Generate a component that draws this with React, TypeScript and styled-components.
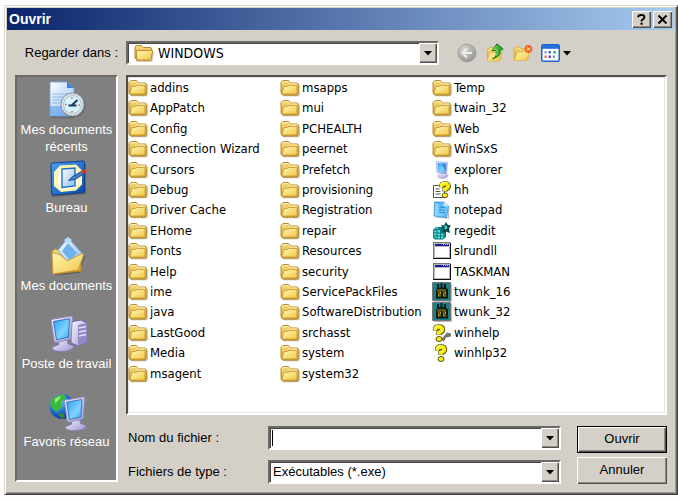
import React from "react";
import styled, { createGlobalStyle, css } from "styled-components";

const face = "#d4d0c8";
const uiFont = '"Liberation Sans", Arial, sans-serif';
const listFont = '"DejaVu Sans Condensed", "DejaVu Sans", sans-serif';

const GlobalStyle = createGlobalStyle`
  *, *::before, *::after { box-sizing: border-box; }
  body { margin: 0; background: #fefefe; color: #000; font: 13px/16px ${uiFont}; }
  button, input, select { font: inherit; color: inherit; margin: 0; padding: 0; border: 0; border-radius: 0; background: none; }
  ul { list-style: none; margin: 0; padding: 0; }
  svg { display: block; flex: none; }
`;

const sunken = css`
  border: 2px solid;
  border-color: #6c6a66 #fff #fff #6c6a66;
`;

const raised = css`
  background: ${face};
  box-shadow: inset 1px 1px 0 #fff, inset -1px -1px 0 #505050, inset -2px -2px 0 #8c8a85;
`;

const Dialog = styled.main`
  margin: 5px 0 3px 4px;
  padding: 1px 3px 10px 1px;
  background: ${face};
  border: 1px solid;
  border-color: #dcd2cc #404040 #404040 #dcd2cc;
  box-shadow: inset 1px 1px 0 #fff, inset -1px -1px 0 #66645f, inset -2px -2px 0 #a09d96;
`;

const TitleBar = styled.header`
  display: flex;
  align-items: center;
  gap: 2px;
  height: 22px;
  margin: 1px 0 0 1px;
  padding: 0 2px;
  background: linear-gradient(90deg, #0a246a, #a6caf0);
`;

const Title = styled.h1`
  flex: 1;
  margin: 0;
  color: #fff;
  font-size: 14px;
  line-height: 16px;
`;

const CaptionButton = styled.button`
  ${raised}
  display: grid;
  place-items: center;
  width: 19px;
  height: 17px;
`;

const Toolbar = styled.div`
  display: grid;
  grid-template-columns: 103px minmax(0, 1fr) 220px;
  column-gap: 8px;
  align-items: center;
  margin: 11px 7px 10px 9px;
`;

const ToolLabel = styled.label`
  text-align: right;
`;

const Tools = styled.div`
  display: flex;
  align-items: center;
  gap: 8px;
  padding-left: 10px;
`;

const ToolButton = styled.button`
  display: flex;
  align-items: center;
  gap: 3px;
  height: 20px;
`;

const Field = styled.div<{ $icon?: boolean }>`
  ${sunken}
  display: grid;
  grid-template-columns: ${(p) => (p.$icon ? "27px" : "0")} minmax(0, 1fr) 18px;
  align-items: center;
  height: 24px;
  background: #fff;
  box-shadow: inset 1px 1px 0 #47464a;
`;

const FieldIcon = styled.span`
  grid-area: 1 / 1;
  padding-left: 6px;
  pointer-events: none;
  z-index: 1;
`;

const Select = styled.select<{ $icon?: boolean }>`
  grid-area: 1 / 1 / 2 / 4;
  appearance: none;
  width: 100%;
  height: 20px;
  padding: 0 20px 0 ${(p) => (p.$icon ? "30px" : "3px")};
  font-family: ${(p) => (p.$icon ? listFont : uiFont)};
  font-size: ${(p) => (p.$icon ? "14px" : "13px")};
  outline: none;
`;

const TextInput = styled.input`
  grid-area: 1 / 1 / 2 / 3;
  width: 100%;
  height: 20px;
  padding: 0 3px;
  outline: none;
  caret-color: transparent;
`;

const Caret = styled.span`
  grid-area: 1 / 2;
  width: 1px;
  height: 16px;
  margin-left: 2px;
  background: #000;
  pointer-events: none;
`;

const DropFace = styled.span`
  ${raised}
  grid-area: 1 / 3;
  display: grid;
  place-items: center;
  align-self: stretch;
  pointer-events: none;
`;

const DropButton = styled.button`
  ${raised}
  grid-area: 1 / 3;
  display: grid;
  place-items: center;
  align-self: stretch;
`;

const Body = styled.div`
  display: grid;
  grid-template-columns: 103px minmax(0, 1fr);
  column-gap: 8px;
  margin: 0 7px 0 9px;
`;

const Places = styled.nav`
  ${sunken}
  padding-top: 4px;
  margin-bottom: 2px;
  background: #808080;
`;

const Place = styled.button`
  display: flex;
  flex-direction: column;
  align-items: center;
  width: 100%;
  height: 78px;
  color: #fff;
  line-height: 17px;
  white-space: pre-line;

  svg { margin-bottom: 2px; }
`;

const FileList = styled.ul`
  ${sunken}
  display: grid;
  grid-auto-flow: column;
  grid-template-rows: repeat(15, minmax(20px, 1fr));
  grid-auto-columns: 152px;
  height: 340px;
  padding: 1px 0 29px;
  background: #fff;
  box-shadow: inset 0 0 0 1px #e8e6e2;
  border-top-color: #504e4c;
  border-left-color: #504e4c;
  overflow: hidden;
`;

const FileButton = styled.button`
  display: flex;
  align-items: center;
  gap: 2px;
  height: 20px;
  font-family: ${listFont};
  white-space: nowrap;
`;

const Form = styled.form`
  display: flex;
  gap: 16px;
  margin-top: 11px;
`;

const Fields = styled.div`
  flex: 1;
  display: grid;
  grid-template-columns: 140px minmax(0, 1fr);
  grid-auto-rows: 24px;
  row-gap: 10px;
  align-items: center;
  padding-left: 2px;
`;

const Actions = styled.div`
  display: grid;
  grid-auto-rows: 27px;
  row-gap: 4px;
  width: 90px;
`;

const PushButton = styled.button<{ $default?: boolean }>`
  ${raised}
  padding-bottom: 2px;
  border: ${(p) => (p.$default ? "1px solid #000" : "0")};
`;

const Defs = styled.svg`
  position: absolute;
`;

const Gradients = () => (
  <Defs width="0" height="0" aria-hidden="true">
    <defs>
      <linearGradient id="folder" x1="0" y1="0" x2="1" y2="1">
        <stop offset="0" stopColor="#fff9b8" />
        <stop offset="1" stopColor="#f2c545" />
      </linearGradient>
      <linearGradient id="folderBack" x1="0" y1="0" x2="0" y2="1">
        <stop offset="0" stopColor="#f7dc82" />
        <stop offset="1" stopColor="#d9a02c" />
      </linearGradient>
      <linearGradient id="screen" x1="0" y1="0" x2="1" y2="1">
        <stop offset="0" stopColor="#2f9af5" />
        <stop offset="0.6" stopColor="#7fd4ff" />
        <stop offset="1" stopColor="#3fa4f2" />
      </linearGradient>
      <linearGradient id="plastic" x1="0" y1="0" x2="1" y2="1">
        <stop offset="0" stopColor="#fafaff" />
        <stop offset="1" stopColor="#9a95d0" />
      </linearGradient>
      <linearGradient id="sheet" x1="0" y1="0" x2="1" y2="1">
        <stop offset="0" stopColor="#ffffff" />
        <stop offset="1" stopColor="#8dbcf0" />
      </linearGradient>
      <linearGradient id="desk" x1="0" y1="0" x2="1" y2="1">
        <stop offset="0" stopColor="#4aa0f0" />
        <stop offset="1" stopColor="#0b49a8" />
      </linearGradient>
      <radialGradient id="globe" cx="0.35" cy="0.3" r="0.75">
        <stop offset="0" stopColor="#8fd8ff" />
        <stop offset="0.5" stopColor="#2478e0" />
        <stop offset="1" stopColor="#0c2f90" />
      </radialGradient>
      <radialGradient id="disc" cx="0.35" cy="0.3" r="0.8">
        <stop offset="0" stopColor="#d6d6d4" />
        <stop offset="1" stopColor="#8f8f8d" />
      </radialGradient>
    </defs>
  </Defs>
);

const FolderIcon = () => (
  <svg width="20" height="18" viewBox="0 0 20 18">
    <path d="M3 16.5h15l1-1V5.5" fill="none" stroke="#8a7a50" strokeOpacity=".55" strokeWidth="1.4" />
    <path d="M1 14V3.5L3 1.5h5.5L10.5 4H17q1.2 0 1.2 1.2V15L17 16H2.5z" fill="url(#folderBack)" stroke="#b98a2c" />
    <path d="M2 4l1.5-1.5h4.7L9.8 5H17" fill="none" stroke="#fff0b0" />
    <path d="M2 14.5L4 7.5h3.5L9 6.5h8v8.5H3z" fill="url(#folder)" stroke="#c79a35" strokeWidth=".8" />
  </svg>
);

const OpenFolderIcon = () => (
  <svg width="20" height="18" viewBox="0 0 20 18">
    <path d="M2 17h15.5l1.5-9" fill="none" stroke="#8a7a50" strokeOpacity=".5" strokeWidth="1.6" />
    <path d="M1 14V3.5Q1 1.5 3 1.5h4.5l2 2H16q1.500 0 1.500 1.500v9L16 16H3z" fill="url(#folderBack)" stroke="#b98a2c" />
    <path d="M2.5 6.5h16.2L17 15.2q-.2.8-1 .8H4q-1 0-1.2-1z" fill="url(#folder)" stroke="#c08d28" />
  </svg>
);

const ExplorerIcon = () => (
  <svg width="20" height="18" viewBox="0 0 20 18">
    <path d="M4 .5l11.500 1-1 11.500-9.500-1.500z" fill="url(#plastic)" stroke="#9fb2e6" strokeWidth=".8" />
    <path d="M5.500 2l8.800.8-.9 8.900-7.300-1.200z" fill="url(#screen)" />
    <path d="M9.500 2.400l4.700.4-.8 7.500z" fill="#1262d8" opacity=".65" />
    <path d="M8 12.500h5.500l2.500 2q-1.500 3-5.500 3-4 0-5-2.500z" fill="url(#plastic)" stroke="#9a90cc" strokeWidth=".6" />
  </svg>
);

const QuestionMark = () => (
  <>
    <path d="M6.500 6.500V5.500Q6.500 3 10 3T13.500 5.800Q13.500 7.500 10 8.800V11" fill="none" stroke="#55510a" strokeWidth="5.400" />
    <ellipse cx="10" cy="15" rx="3" ry="2.500" fill="#f8ee1c" stroke="#55510a" />
    <path d="M6.300 6.200V5.300Q6.300 2.800 9.800 2.800T13.300 5.600Q13.300 7.300 9.800 8.600V10.800" fill="none" stroke="#f8ee1c" strokeWidth="3.800" />
    <path d="M5.500 5Q5.500 1.800 9.500 1.800" fill="none" stroke="#fffba0" />
  </>
);

const HelpFileIcon = () => (
  <svg width="20" height="18" viewBox="0 0 20 18">
    <path d="M1.500 4.500h11v12h-11z" fill="#fff" stroke="#555" />
    <path d="M3.500 8h4M3.500 10.500h5M3.500 13h5" stroke="#555" />
    <g transform="translate(3.500 0) scale(.95)">
      <QuestionMark />
    </g>
  </svg>
);

const WinHelpIcon = ({ shadow = false }: { shadow?: boolean }) => (
  <svg width="20" height="18" viewBox="0 0 20 18">
    {shadow && <path d="M9 15.500l6-7 4 1v3l-5 1-2 4z" fill="#77776a" />}
    <g transform={shadow ? "translate(-3 0)" : "translate(-1 0)"}>
      <QuestionMark />
    </g>
  </svg>
);

const NotepadIcon = () => (
  <svg width="20" height="18" viewBox="0 0 20 18">
    <path d="M4 16l12.500 1V6" fill="none" stroke="#8796a8" strokeOpacity=".6" strokeWidth="1.500" />
    <path d="M2.500 1h9.500l4.500 4-2 11.500-12.500-1.500z" fill="url(#screen)" stroke="#4a93c8" strokeWidth=".8" />
    <path d="M3 2l4 .5-1.500 12-2.500-.3z" fill="#a8dcfa" opacity=".7" />
    <path d="M12 1l4.500 4-4.800-.5z" fill="#d9efff" />
    <path d="M7.500 6l6 .8M7.200 8.500l6 .8M6.900 11l6 .8" stroke="#187ec8" strokeWidth=".9" />
  </svg>
);

const RegeditIcon = () => (
  <svg width="20" height="18" viewBox="0 0 20 18">
    <path d="M1 8l3-3h7l3 3v7l-3 2.500H3L1 16z" fill="#0b7c7e" />
    <path d="M2 8.500h2.500v2H2zM5.500 8h2.500v2.500H5.500zM2 11.500h2.500v2H2zM5.500 11.500h2.500v2H5.500zM9 11.500h2.500v2H9zM5.500 14.500h2.500v2H5.500zM2.500 14.500h2v1.500h-2zM9 14.500h2.500v2H9zM4.500 5.500h2.500l-1.500 1.500H3.500z" fill="#5fdcd6" />
    <path d="M9 3l3 .5L14 0l2 3 3 .5-2 3 1 4.500-4-1.500L10.500 11l.5-4z" fill="#06484c" />
    <path d="M12 4.500l2.500-1.500L15.500 6l-2.500 2z" fill="#49c9c6" />
  </svg>
);

const AppWindowIcon = () => (
  <svg width="20" height="18" viewBox="0 0 20 18" shapeRendering="crispEdges">
    <path d="M1 0h18v17H1z" fill="#b9b9b9" />
    <path d="M18 1h1v16H1v-1h17z" fill="#111" />
    <path d="M1 0h17v1H1zM1 0h1v16H1z" fill="#777" />
    <path d="M3 5h14v10H3z" fill="#fff" />
    <path d="M3 2h14v2H3z" fill="#1a1a9c" />
    <path d="M11 2h1v1h-1zM13 2h1v1h-1zM15 2h1v1h-1z" fill="#d4d0c8" />
  </svg>
);

const TwunkIcon = () => (
  <svg width="20" height="20" viewBox="0 0 20 20">
    <path d="M.5.500h18v18H.500z" fill="#188088" stroke="#777" />
    <path d="M2 19.500h17.500V2" fill="none" stroke="#bbb" />
    <path d="M6 2v5M9.500 1v6M13 2v5" stroke="#061c1c" strokeWidth="2" />
    <path d="M4 7.500l2-2h8l2 2v9H4z" fill="#101408" />
    <path d="M5.500 10h3v2h-2v2h2.500M10.500 10h3v2h-2v2h3M5 8h9" fill="none" stroke="#a8a020" strokeWidth="1.100" />
  </svg>
);

const DownArrow = () => (
  <svg width="8" height="5" viewBox="0 0 8 5">
    <path d="M0 0h8L4 4.600z" />
  </svg>
);

const HelpGlyph = () => (
  <svg width="9" height="11" viewBox="0 0 9 11">
    <path d="M1.200 3.300Q1.200 1 4.300 1T7.400 3.200Q7.400 4.400 5.800 5.300 4.500 6 4.500 7.500" fill="none" stroke="#000" strokeWidth="1.900" />
    <path d="M3.500 8.700h2.200v2H3.500z" />
  </svg>
);

const CloseGlyph = () => (
  <svg width="11" height="9" viewBox="0 0 11 9">
    <path d="M1.500.5l8 8M9.500.500l-8 8" stroke="#000" strokeWidth="2" />
  </svg>
);

const BackIcon = () => (
  <svg width="20" height="20" viewBox="0 0 20 20">
    <circle cx="10" cy="10" r="9" fill="url(#disc)" stroke="#9b9b99" strokeWidth=".8" />
    <path d="M15 10H6.500M10 5.500L5.500 10l4.500 4.500" fill="none" stroke="#ececea" strokeWidth="2.200" />
  </svg>
);

const UpIcon = () => (
  <svg width="20" height="20" viewBox="0 0 20 20">
    <path d="M2.500 17V6.500l2-2h4l1.500 2h6V16L14 18z" fill="url(#folderBack)" stroke="#d3ad47" strokeWidth=".8" />
    <path d="M2 18l3-8.500h6.500l5-1.500-2 10z" fill="url(#folder)" stroke="#dbb64c" strokeWidth=".8" />
    <path d="M7.500 15.800q5-1.500 3.600-8.300l-4 .2L12 .8 18.200 6l-3.200.8q1.600 7-7.500 9z" fill="#38b030" stroke="#14701a" strokeWidth=".9" />
    <path d="M11.500 3.500l-2.300 3 2.600.2q1 3.800-.5 6" fill="none" stroke="#98ea7e" strokeWidth=".9" />
  </svg>
);

const NewFolderIcon = () => (
  <svg width="20" height="20" viewBox="0 0 20 20">
    <path d="M1 16.500V5.500l2-1.500H7.500l1.500 2H15v10.500z" fill="url(#folderBack)" stroke="#d3ad47" strokeWidth=".8" />
    <path d="M1 17.500l3.500-8.500H10l1.500-1 5.500 1-3.500 8.500z" fill="url(#folder)" stroke="#dbb64c" strokeWidth=".8" />
    <circle cx="15.500" cy="6" r="3.200" fill="#ff9a60" stroke="#f2622c" strokeWidth="1.400" />
    <path d="M15.500 3v6M12.500 6h6" stroke="#f0501e" strokeWidth="1" />
    <circle cx="15.500" cy="6" r="1.300" fill="#ffd890" />
  </svg>
);

const ViewsIcon = () => (
  <svg width="19" height="18" viewBox="0 0 19 18">
    <rect x=".750" y=".750" width="17.500" height="16.500" rx="1.500" fill="#fff" stroke="#1f63cf" strokeWidth="1.500" />
    <path d="M1 1h17v3.800H1z" fill="#2272dc" />
    <path d="M3.500 7h2.200v2.500H3.500zM11.800 11.500H14V14h-2.200z" fill="#8a9bb0" />
    <path d="M7.600 7h2.200v2.500H7.600z" fill="#2458d8" />
    <path d="M12.500 7h2.200v2.500h-2.200z" fill="#24a044" />
    <path d="M3.500 11.500h2.200V14H3.500z" fill="#e66a50" />
    <path d="M7.600 11.500h2.200V14H7.600z" fill="#3a48b8" />
  </svg>
);

const RecentDocsIcon = () => (
  <svg width="40" height="38" viewBox="0 0 40 38">
    <path d="M4 36l22 .5V8" fill="none" stroke="#555" strokeOpacity=".5" strokeWidth="2" />
    <path d="M3 1h17l7 6v28H3z" fill="url(#sheet)" stroke="#6c9fdd" strokeWidth=".8" />
    <path d="M20 1l7 6h-7z" fill="#3b83d8" />
    <path d="M5 13h16M5 16h12M5 19h10M5 22h9" stroke="#8cb8ee" />
    <path d="M3 25h13l5 8v2H3z" fill="#5c9ce8" opacity=".6" />
    <circle cx="26.500" cy="24.500" r="12" fill="#555" opacity=".5" />
    <circle cx="25.500" cy="23.500" r="11.500" fill="#dfe3ea" stroke="#8a909c" />
    <circle cx="25.500" cy="23.500" r="9" fill="#d4f2fb" stroke="#a3b4c6" strokeWidth=".8" />
    <path d="M30.500 19l-6 5.500M21.500 24.500h8" stroke="#203a60" strokeWidth="2" />
    <path d="M25 16v1.500M25 30v1.500M18 23.500h1.500M31.500 24H33" stroke="#e0643c" strokeWidth="1.500" />
  </svg>
);

const DesktopIcon = () => (
  <svg width="40" height="38" viewBox="0 0 40 38">
    <path d="M5 37l33-3V5" fill="none" stroke="#444" strokeOpacity=".5" strokeWidth="2" />
    <path d="M4 5.500q0-1.500 1.500-1.500L36 2q1.500 0 1.500 1.500V32q0 1.500-1.500 1.600L6 36q-1.500 0-1.500-1.500z" fill="url(#desk)" stroke="#0c3f98" />
    <path d="M13 6.500l16-1 6 6v14l-6 6-15 1.500-7-6V13z" fill="#fff6b4" />
    <path d="M14 9.500l13-1 4 5v12l-5 4-12 1-3-4V14z" fill="#fffef0" />
    <path d="M15 10l13-1v18l-13 1.500z" fill="url(#sheet)" stroke="#1f6fc8" strokeWidth="1.400" />
    <path d="M21.500 21.500l4-4L35 12l2.500 2.500-9.500 6z" fill="#3b7fc2" stroke="#143f80" strokeWidth=".8" />
    <path d="M34 12.500l4-2.500 2 3-4 2z" fill="#d23a26" />
  </svg>
);

const DocumentsIcon = () => (
  <svg width="40" height="38" viewBox="0 0 40 38">
    <path d="M8 38l24-3 5-16" fill="none" stroke="#444" strokeOpacity=".5" strokeWidth="2" />
    <path d="M5 14l3-2 6 1 2 2 18 1v18L6 37z" fill="url(#folderBack)" stroke="#b98a2c" />
    <path d="M21 1l14 15-12 13L11 13z" fill="url(#sheet)" stroke="#71a4dd" />
    <path d="M21 6l9 10-7 8-8-10z" fill="#6fb2ee" />
    <path d="M17 3l4-3 4 3-4 4z" fill="#b6dcff" />
    <path d="M5 15.500q9 1 15 8.500L35 16.500q2 0 1.500 2L31 33l-25 4z" fill="url(#folder)" stroke="#c79a35" />
    <path d="M21 24.500L18 34" stroke="#f6dc72" strokeWidth="1.500" />
  </svg>
);

const Monitor = () => (
  <>
    <path d="M11 24l9-1 1 6 6 2q-1 5-12 5.500Q5 36.500 5 32.500l7-3z" fill="url(#plastic)" stroke="#7f78b8" strokeWidth=".8" />
    <path d="M4 4.500L24 1q1.500 0 1.500 1.500L24 24 9 27.500q-1.500 0-2-1.500z" fill="url(#plastic)" stroke="#8a88c0" />
    <path d="M6.500 6.500L22.500 3.700 21.500 22 9.500 24.800z" fill="url(#screen)" stroke="#1c5fb8" strokeWidth=".8" />
  </>
);

const ComputerIcon = () => (
  <svg width="40" height="38" viewBox="0 0 40 38">
    <path d="M24 7l10-2 6 3v19l-9 4-7-3z" fill="url(#plastic)" stroke="#6e68a8" />
    <path d="M31 10l9-2v19l-9 4z" fill="#8f8ac6" />
    <path d="M32 13l7-1.500M32 17l7-1.500M32 21l7-1.500" stroke="#e6e4ff" strokeWidth="1.400" />
    <Monitor />
  </svg>
);

const NetworkIcon = () => (
  <svg width="40" height="38" viewBox="0 0 40 38">
    <circle cx="15" cy="13.500" r="12.500" fill="url(#globe)" />
    <path d="M6 5q5-4 11-3.500L19 5l-5 4 1 5-5 5q-4-1-5-5l-2-2q0-4 3-7z" fill="#3cb83c" />
    <path d="M8 6q3-3 6-2.500l-2 3-4 4z" fill="#a8ec7c" />
    <path d="M11 21l5-1 2 4-3 1.500z" fill="#27943a" />
    <g transform="translate(13.500 3) scale(.95)">
      <Monitor />
    </g>
  </svg>
);

const places: [string, React.FC][] = [
  ["Mes documents\nrécents", RecentDocsIcon],
  ["Bureau", DesktopIcon],
  ["Mes documents", DocumentsIcon],
  ["Poste de travail", ComputerIcon],
  ["Favoris réseau", NetworkIcon],
];

const folders = [
  "addins", "AppPatch", "Config", "Connection Wizard", "Cursors", "Debug", "Driver Cache", "EHome",
  "Fonts", "Help", "ime", "java", "LastGood", "Media", "msagent",
  "msapps", "mui", "PCHEALTH", "peernet", "Prefetch", "provisioning", "Registration", "repair",
  "Resources", "security", "ServicePackFiles", "SoftwareDistribution", "srchasst", "system", "system32",
  "Temp", "twain_32", "Web", "WinSxS",
];

const programs: [string, React.ReactNode][] = [
  ["explorer", <ExplorerIcon />],
  ["hh", <HelpFileIcon />],
  ["notepad", <NotepadIcon />],
  ["regedit", <RegeditIcon />],
  ["slrundll", <AppWindowIcon />],
  ["TASKMAN", <AppWindowIcon />],
  ["twunk_16", <TwunkIcon />],
  ["twunk_32", <TwunkIcon />],
  ["winhelp", <WinHelpIcon shadow />],
  ["winhlp32", <WinHelpIcon />],
];

const entries: [string, React.ReactNode][] = [
  ...folders.map((name): [string, React.ReactNode] => [name, <FolderIcon />]),
  ...programs,
];

export default function App() {
  return (
    <>
      <GlobalStyle />
      <Gradients />
      <Dialog>
        <TitleBar>
          <Title>Ouvrir</Title>
          <CaptionButton type="button" aria-label="Aide"><HelpGlyph /></CaptionButton>
          <CaptionButton type="button" aria-label="Fermer"><CloseGlyph /></CaptionButton>
        </TitleBar>
        <Toolbar>
          <ToolLabel htmlFor="look-in">Regarder dans :</ToolLabel>
          <Field $icon>
            <FieldIcon><OpenFolderIcon /></FieldIcon>
            <Select id="look-in" $icon><option>WINDOWS</option></Select>
            <DropFace><DownArrow /></DropFace>
          </Field>
          <Tools>
            <ToolButton type="button" aria-label="Précédent"><BackIcon /></ToolButton>
            <ToolButton type="button" aria-label="Dossier parent"><UpIcon /></ToolButton>
            <ToolButton type="button" aria-label="Nouveau dossier"><NewFolderIcon /></ToolButton>
            <ToolButton type="button" aria-label="Affichage"><ViewsIcon /><DownArrow /></ToolButton>
          </Tools>
        </Toolbar>
        <Body>
          <Places aria-label="Emplacements">
            {places.map(([name, Icon]) => (
              <Place type="button" key={name}><Icon />{name}</Place>
            ))}
          </Places>
          <div>
            <FileList>
              {entries.map(([name, icon]) => (
                <li key={name}><FileButton type="button">{icon}{name}</FileButton></li>
              ))}
            </FileList>
            <Form onSubmit={(e) => e.preventDefault()}>
              <Fields>
                <label htmlFor="file-name">Nom du fichier :</label>
                <Field>
                  <TextInput id="file-name" type="text" autoComplete="off" />
                  <Caret />
                  <DropButton type="button" aria-label="Noms récents"><DownArrow /></DropButton>
                </Field>
                <label htmlFor="file-type">Fichiers de type :</label>
                <Field>
                  <Select id="file-type"><option>Exécutables (*.exe)</option></Select>
                  <DropFace><DownArrow /></DropFace>
                </Field>
              </Fields>
              <Actions>
                <PushButton type="submit" $default>Ouvrir</PushButton>
                <PushButton type="button">Annuler</PushButton>
              </Actions>
            </Form>
          </div>
        </Body>
      </Dialog>
    </>
  );
}
